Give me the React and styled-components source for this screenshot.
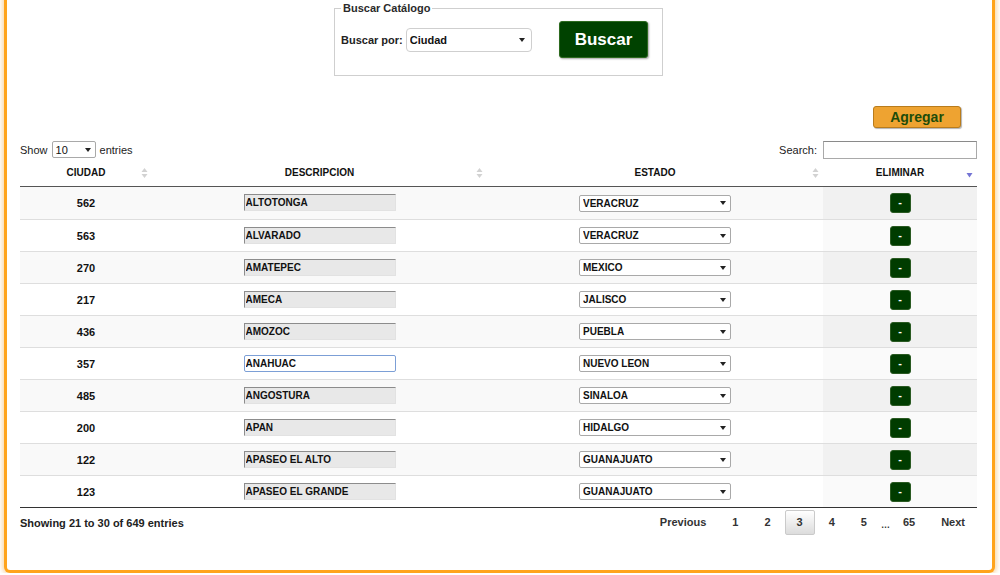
import React from 'react';
import styled, { createGlobalStyle } from 'styled-components';

const GlobalStyle = createGlobalStyle`
  html, body {
    margin: 0;
    padding: 0;
    background: #fff;
    overflow: hidden;
  }
  body {
    font-family: "Liberation Sans", Arial, sans-serif;
    font-size: 11px;
    color: #222;
  }
`;

const COLS = '132px 335px 336px 154px';

const Frame = styled.div`
  margin: -12px 5px 0 4px;
  height: 585px;
  box-sizing: border-box;
  border: 3px solid #ffa41c;
  border-top: none;
  border-radius: 0 0 6px 6px;
  box-shadow: 0 0 4px 2px rgba(240, 175, 80, 0.45);
  padding: 12px 15px 0 13px;
  background: #fff;
`;

const Fieldset = styled.fieldset`
  width: 329px;
  box-sizing: border-box;
  margin: 2px auto 0;
  border: 1px solid #cfcfcf;
  padding: 7px 14px 17px 6px;
  min-inline-size: 0;
`;

const Legend = styled.legend`
  padding: 0 2px;
  font-size: 11px;
  line-height: 12px;
  font-weight: bold;
  color: #2a2a2a;
`;

const SearchRow = styled.div`
  display: flex;
  align-items: center;
  height: 37px;
`;

const Label = styled.span`
  flex-shrink: 0;
  white-space: nowrap;
  font-weight: ${p => (p.$bold ? 'bold' : 'normal')};
  color: #222;
`;

const SelectWrap = styled.span`
  position: relative;
  flex-shrink: 0;
  display: inline-flex;
  margin: ${p => p.$margin || '0'};

  &::after {
    content: '';
    position: absolute;
    right: ${p => p.$arrowRight || 6}px;
    top: 50%;
    margin-top: -2px;
    border-left: 3px solid transparent;
    border-right: 3px solid transparent;
    border-top: 4px solid #222;
    pointer-events: none;
  }
`;

const Select = styled.select`
  appearance: none;
  -webkit-appearance: none;
  width: ${p => p.$w}px;
  height: ${p => p.$h}px;
  box-sizing: border-box;
  border: 1px solid ${p => p.$border || '#a9a9a9'};
  border-radius: ${p => p.$radius || 2}px;
  background: #fff;
  padding: 0 0 0 ${p => p.$pad || 3}px;
  font-family: inherit;
  font-size: ${p => p.$size || 10}px;
  font-weight: ${p => (p.$light ? 'normal' : 'bold')};
  color: #111;
  outline: none;
`;

const BigButton = styled.button`
  flex-shrink: 0;
  margin-left: auto;
  width: 89px;
  height: 37px;
  box-sizing: border-box;
  background: #004200;
  border: 1px solid #2d6a1f;
  border-radius: 3px;
  box-shadow: 1px 1px 2px rgba(0, 0, 0, 0.35);
  color: #fff;
  font-family: inherit;
  font-size: 17px;
  font-weight: bold;
  padding: 0;
`;

const AddRow = styled.div`
  display: flex;
  justify-content: flex-end;
  margin-top: 30px;
  padding-right: 16px;
`;

const AddButton = styled.button`
  width: 88px;
  height: 22px;
  box-sizing: border-box;
  background: #eea331;
  border: 1px solid #b97c1c;
  border-radius: 3px;
  box-shadow: 1px 1px 1px rgba(0, 0, 0, 0.3);
  color: #1d4c0a;
  font-family: inherit;
  font-size: 14px;
  font-weight: bold;
  padding: 0;
  line-height: 18px;
`;

const Controls = styled.div`
  display: flex;
  justify-content: space-between;
  align-items: center;
  margin-top: 13px;
  height: 17px;
`;

const Group = styled.div`
  display: flex;
  align-items: center;
  gap: ${p => p.$gap || 4}px;
`;

const SearchInput = styled.input`
  width: 154px;
  height: 18px;
  box-sizing: border-box;
  border: 1px solid #a9a9a9;
  border-top-color: #8a8a8a;
  padding: 0 3px;
  font-family: inherit;
  font-size: 11px;
  outline: none;
`;

const HeadRow = styled.div`
  display: grid;
  grid-template-columns: ${COLS};
  height: 29px;
  box-sizing: border-box;
  border-bottom: 1px solid #555;
`;

const HeadCell = styled.div`
  position: relative;
  display: flex;
  align-items: center;
  justify-content: center;
  padding-top: 1px;
  font-size: 10px;
  font-weight: bold;
  color: #111;
`;

const SortIcon = styled.svg`
  position: absolute;
  right: 4px;
  top: ${p => p.$top}px;
`;

const Row = styled.div`
  display: grid;
  grid-template-columns: ${COLS};
  height: 32px;
  box-sizing: border-box;
  border-top: ${p => (p.$first ? 'none' : '1px solid #dedede')};
  background: ${p => (p.$odd ? '#f9f9f9' : '#fff')};
`;

const Cell = styled.div`
  display: flex;
  align-items: center;
  justify-content: center;
  font-weight: bold;
  color: #111;
  background: ${p => (p.$sorted ? (p.$odd ? '#f1f1f1' : '#fafafa') : 'transparent')};
`;

const TextField = styled.input`
  width: 152px;
  height: 17px;
  box-sizing: border-box;
  padding: 0 1px;
  font-family: inherit;
  font-size: 10px;
  font-weight: bold;
  color: #111;
  outline: none;
  background: ${p => (p.$active ? '#fff' : '#e8e8e8')};
  border: 1px solid ${p => (p.$active ? '#7c9fd6' : '#e2e2e2')};
  border-top-color: ${p => (p.$active ? '#7c9fd6' : '#8c8c8c')};
  border-left-color: ${p => (p.$active ? '#7c9fd6' : '#8c8c8c')};
  border-radius: ${p => (p.$active ? '2px' : '0')};
  margin-top: -1px;
`;

const DelButton = styled.button`
  width: 21px;
  height: 20px;
  box-sizing: border-box;
  padding: 0 0 2px;
  background: #003c00;
  border: 1px solid #2a5a22;
  border-radius: 3px;
  color: #fff;
  font-family: inherit;
  font-size: 11px;
  font-weight: bold;
  line-height: 14px;
`;

const TableEnd = styled.div`
  border-top: 1px solid #333;
`;

const Footer = styled.div`
  display: flex;
  justify-content: space-between;
  align-items: center;
  padding-top: 2px;
`;

const Info = styled.div`
  font-weight: bold;
  color: #222;
`;

const Pager = styled.div`
  display: flex;
  align-items: center;
`;

const PageButton = styled.span`
  display: inline-block;
  box-sizing: border-box;
  min-width: 28px;
  height: 25px;
  line-height: 23px;
  padding: 0 11px;
  margin-left: 2px;
  text-align: center;
  font-weight: bold;
  color: #333;
  border: 1px solid ${p => (p.$current ? '#cacaca' : 'transparent')};
  border-radius: 2px;
  background: ${p => (p.$current ? 'linear-gradient(to bottom, #fff 0%, #dcdcdc 100%)' : 'transparent')};
`;

const Ellipsis = styled.span`
  display: inline-block;
  width: 8px;
  margin-left: 2px;
  text-align: center;
  font-size: 9px;
  font-weight: bold;
  color: #333;
  padding-top: 4px;
`;

const ESTADOS = [
  'GUANAJUATO', 'HIDALGO', 'JALISCO', 'MEXICO', 'NUEVO LEON',
  'PUEBLA', 'SINALOA', 'VERACRUZ',
];

const rows = [
  ['562', 'ALTOTONGA', 'VERACRUZ'],
  ['563', 'ALVARADO', 'VERACRUZ'],
  ['270', 'AMATEPEC', 'MEXICO'],
  ['217', 'AMECA', 'JALISCO'],
  ['436', 'AMOZOC', 'PUEBLA'],
  ['357', 'ANAHUAC', 'NUEVO LEON'],
  ['485', 'ANGOSTURA', 'SINALOA'],
  ['200', 'APAN', 'HIDALGO'],
  ['122', 'APASEO EL ALTO', 'GUANAJUATO'],
  ['123', 'APASEO EL GRANDE', 'GUANAJUATO'],
];

const BothArrows = () => (
  <SortIcon $top={10} width="7" height="10" viewBox="0 0 7 10">
    <path d="M3.5 0 L6.5 4 L0.5 4 Z" fill="#d2d2d2" />
    <path d="M3.5 10 L6.5 6 L0.5 6 Z" fill="#d2d2d2" />
  </SortIcon>
);

const DescArrow = () => (
  <SortIcon $top={15} width="7" height="5" viewBox="0 0 7 5">
    <path d="M0.5 0 L6.5 0 L3.5 4.5 Z" fill="#7474d4" />
  </SortIcon>
);

export default function App() {
  return (
    <>
      <GlobalStyle />
      <Frame>
        <Fieldset>
          <Legend>Buscar Catálogo</Legend>
          <SearchRow>
            <Label $bold>Buscar por:</Label>
            <SelectWrap $margin="0 0 0 3px" $arrowRight={7}>
              <Select $w={126} $h={24} $radius={4} $border="#cfcfcf" $size={11} defaultValue="ciudad">
                <option value="ciudad">Ciudad</option>
                <option value="descripcion">Descripcion</option>
                <option value="estado">Estado</option>
              </Select>
            </SelectWrap>
            <BigButton>Buscar</BigButton>
          </SearchRow>
        </Fieldset>

        <AddRow>
          <AddButton>Agregar</AddButton>
        </AddRow>

        <Controls>
          <Group>
            <Label>Show</Label>
            <SelectWrap $arrowRight={5}>
              <Select $w={44} $h={17} $size={11} $light defaultValue="10">
                <option>10</option>
                <option>25</option>
                <option>50</option>
                <option>100</option>
              </Select>
            </SelectWrap>
            <Label>entries</Label>
          </Group>
          <Group $gap={6}>
            <Label>Search:</Label>
            <SearchInput type="text" />
          </Group>
        </Controls>

        <HeadRow>
          <HeadCell>CIUDAD<BothArrows /></HeadCell>
          <HeadCell>DESCRIPCION<BothArrows /></HeadCell>
          <HeadCell>ESTADO<BothArrows /></HeadCell>
          <HeadCell>ELIMINAR<DescArrow /></HeadCell>
        </HeadRow>

        {rows.map(([id, desc, estado], i) => {
          const odd = i % 2 === 0;
          return (
            <Row key={id} $odd={odd} $first={i === 0}>
              <Cell>{id}</Cell>
              <Cell>
                <TextField type="text" defaultValue={desc} readOnly $active={id === '357'} />
              </Cell>
              <Cell>
                <SelectWrap $arrowRight={5}>
                  <Select $w={152} $h={17} defaultValue={estado}>
                    {ESTADOS.map(e => (
                      <option key={e} value={e}>{e}</option>
                    ))}
                  </Select>
                </SelectWrap>
              </Cell>
              <Cell $sorted $odd={odd}>
                <DelButton>-</DelButton>
              </Cell>
            </Row>
          );
        })}
        <TableEnd />

        <Footer>
          <Info>Showing 21 to 30 of 649 entries</Info>
          <Pager>
            <PageButton>Previous</PageButton>
            <PageButton>1</PageButton>
            <PageButton>2</PageButton>
            <PageButton $current>3</PageButton>
            <PageButton>4</PageButton>
            <PageButton>5</PageButton>
            <Ellipsis>…</Ellipsis>
            <PageButton>65</PageButton>
            <PageButton>Next</PageButton>
          </Pager>
        </Footer>
      </Frame>
    </>
  );
}
